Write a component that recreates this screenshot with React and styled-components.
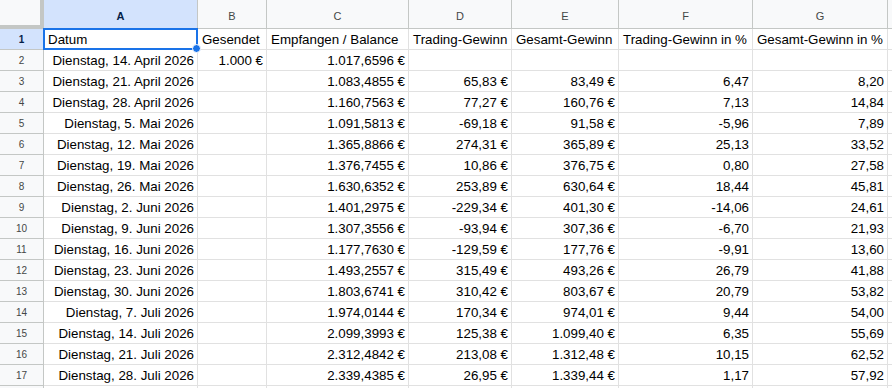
import React from "react";
import styled, { createGlobalStyle } from "styled-components";

const GlobalStyle = createGlobalStyle`
  html, body {
    margin: 0;
    padding: 0;
    background: #fff;
    overflow: hidden;
  }
  body {
    font-family: "Liberation Sans", Arial, sans-serif;
  }
`;

const COLS = "44px 154px 69px 142px 103px 107px 134px 135px 120px";

const Sheet = styled.div`
  width: 892px;
  height: 388px;
  overflow: hidden;
  background: #fff;
`;

const Row = styled.div`
  display: grid;
  grid-template-columns: ${COLS};
  height: ${(props) => (props.head ? "29px" : "21px")};
`;

const Corner = styled.div`
  background: #f8f9fa;
  border-right: 4px solid #c4c7c5;
  border-bottom: 4px solid #c4c7c5;
  box-sizing: border-box;
`;

const ColHead = styled.div`
  box-sizing: border-box;
  display: flex;
  align-items: center;
  justify-content: center;
  padding-top: 3px;
  background: ${(props) => (props.active ? "#d3e3fd" : "#f8f9fa")};
  border-right: 1px solid #c4c7c5;
  border-bottom: 1px solid #c4c7c5;
  color: ${(props) => (props.active ? "#041e49" : "#444746")};
  font-size: 11px;
  font-weight: ${(props) => (props.active ? 700 : 400)};
  overflow: hidden;
`;

const RowHead = styled.div`
  box-sizing: border-box;
  display: flex;
  align-items: center;
  justify-content: center;
  background: ${(props) => (props.active ? "#d3e3fd" : "#f8f9fa")};
  border-right: 1px solid #c4c7c5;
  border-bottom: 1px solid #c4c7c5;
  color: ${(props) => (props.active ? "#041e49" : "#444746")};
  font-size: 10px;
  font-weight: ${(props) => (props.active ? 700 : 400)};
`;

const Cell = styled.div`
  position: relative;
  box-sizing: border-box;
  display: flex;
  align-items: center;
  justify-content: ${(props) => (props.right ? "flex-end" : "flex-start")};
  padding: 0 3px 0 4px;
  border-right: 1px solid #e1e1e1;
  border-bottom: 1px solid #e1e1e1;
  color: #000;
  font-size: 13.33px;
  white-space: nowrap;
  overflow: ${(props) => (props.selected ? "visible" : "hidden")};
`;

const Selection = styled.div`
  position: absolute;
  left: -1px;
  top: -1px;
  right: -1px;
  bottom: -1px;
  border: 2px solid #1a73e8;
  pointer-events: none;
  z-index: 2;
`;

const Handle = styled.div`
  position: absolute;
  right: -5px;
  bottom: -5px;
  width: 7px;
  height: 7px;
  border-radius: 50%;
  background: #1a73e8;
  border: 1px solid #fff;
  z-index: 3;
`;

const letters = ["A", "B", "C", "D", "E", "F", "G", "H"];

const headers = [
  "Datum",
  "Gesendet",
  "Empfangen / Balance",
  "Trading-Gewinn",
  "Gesamt-Gewinn",
  "Trading-Gewinn in %",
  "Gesamt-Gewinn in %",
  "Trading",
];

const rows = [
  ["Dienstag, 14. April 2026", "1.000 €", "1.017,6596 €", "", "", "", ""],
  ["Dienstag, 21. April 2026", "", "1.083,4855 €", "65,83 €", "83,49 €", "6,47", "8,20"],
  ["Dienstag, 28. April 2026", "", "1.160,7563 €", "77,27 €", "160,76 €", "7,13", "14,84"],
  ["Dienstag, 5. Mai 2026", "", "1.091,5813 €", "-69,18 €", "91,58 €", "-5,96", "7,89"],
  ["Dienstag, 12. Mai 2026", "", "1.365,8866 €", "274,31 €", "365,89 €", "25,13", "33,52"],
  ["Dienstag, 19. Mai 2026", "", "1.376,7455 €", "10,86 €", "376,75 €", "0,80", "27,58"],
  ["Dienstag, 26. Mai 2026", "", "1.630,6352 €", "253,89 €", "630,64 €", "18,44", "45,81"],
  ["Dienstag, 2. Juni 2026", "", "1.401,2975 €", "-229,34 €", "401,30 €", "-14,06", "24,61"],
  ["Dienstag, 9. Juni 2026", "", "1.307,3556 €", "-93,94 €", "307,36 €", "-6,70", "21,93"],
  ["Dienstag, 16. Juni 2026", "", "1.177,7630 €", "-129,59 €", "177,76 €", "-9,91", "13,60"],
  ["Dienstag, 23. Juni 2026", "", "1.493,2557 €", "315,49 €", "493,26 €", "26,79", "41,88"],
  ["Dienstag, 30. Juni 2026", "", "1.803,6741 €", "310,42 €", "803,67 €", "20,79", "53,82"],
  ["Dienstag, 7. Juli 2026", "", "1.974,0144 €", "170,34 €", "974,01 €", "9,44", "54,00"],
  ["Dienstag, 14. Juli 2026", "", "2.099,3993 €", "125,38 €", "1.099,40 €", "6,35", "55,69"],
  ["Dienstag, 21. Juli 2026", "", "2.312,4842 €", "213,08 €", "1.312,48 €", "10,15", "62,52"],
  ["Dienstag, 28. Juli 2026", "", "2.339,4385 €", "26,95 €", "1.339,44 €", "1,17", "57,92"],
];

export default function App() {
  return (
    <>
      <GlobalStyle />
      <Sheet>
        <Row head>
          <Corner />
          {letters.map((l, i) => (
            <ColHead key={l} active={i === 0}>
              {l}
            </ColHead>
          ))}
        </Row>
        <Row>
          <RowHead active>1</RowHead>
          {headers.map((h, i) => (
            <Cell key={h} selected={i === 0}>
              {h}
              {i === 0 && (
                <Selection>
                  <Handle />
                </Selection>
              )}
            </Cell>
          ))}
        </Row>
        {rows.map((r, ri) => (
          <Row key={ri}>
            <RowHead>{ri + 2}</RowHead>
            {r.map((v, ci) => (
              <Cell key={ci} right>
                {v}
              </Cell>
            ))}
            <Cell />
          </Row>
        ))}
        <Row>
          <RowHead />
          {letters.map((l) => (
            <Cell key={l} />
          ))}
        </Row>
      </Sheet>
    </>
  );
}
